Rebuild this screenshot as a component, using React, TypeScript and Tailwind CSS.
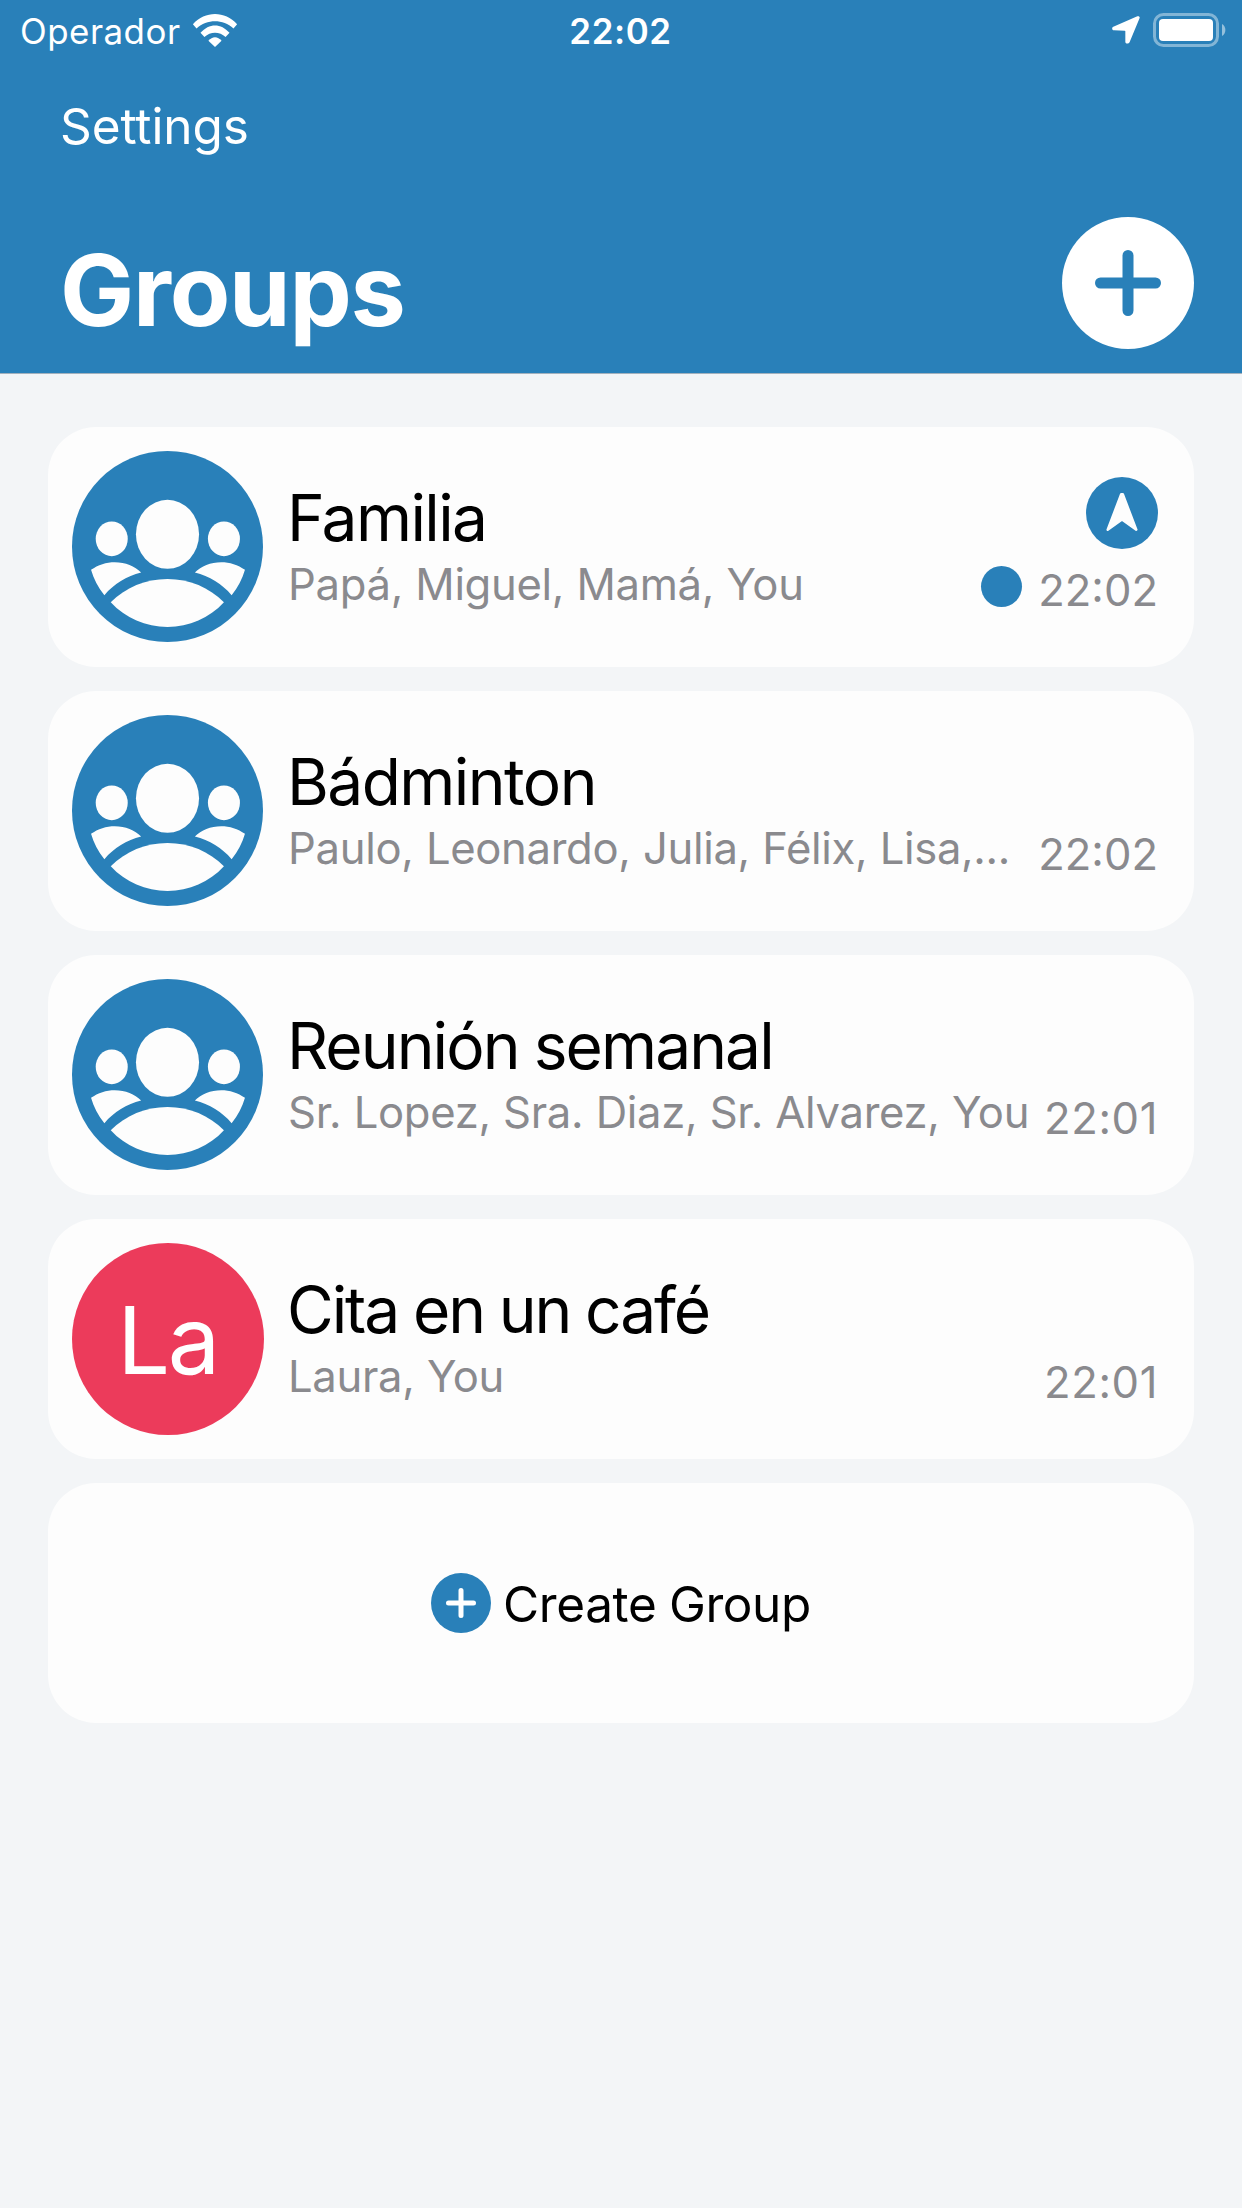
import React from "react";

type Group = {
  name: string;
  nameSpacing: string;
  members: string;
  time: string;
  timeSpacing: string;
  initials?: string;
  unread?: boolean;
  sharingLocation?: boolean;
};

const groups: Group[] = [
  {
    name: "Familia",
    nameSpacing: "tracking-[-1.6px]",
    members: "Papá, Miguel, Mamá, You",
    time: "22:02",
    timeSpacing: "tracking-normal",
    unread: true,
    sharingLocation: true,
  },
  {
    name: "Bádminton",
    nameSpacing: "tracking-[-1.55px]",
    members: "Paulo, Leonardo, Julia, Félix, Lisa,...",
    time: "22:02",
    timeSpacing: "tracking-normal",
  },
  {
    name: "Reunión semanal",
    nameSpacing: "tracking-[-1.9px]",
    members: "Sr. Lopez, Sra. Diaz, Sr. Alvarez, You",
    time: "22:01",
    timeSpacing: "tracking-[0.6px]",
  },
  {
    name: "Cita en un café",
    nameSpacing: "tracking-[-2.1px]",
    members: "Laura, You",
    time: "22:01",
    timeSpacing: "tracking-[0.6px]",
    initials: "La",
  },
];

function WifiIcon() {
  return (
    <svg viewBox="0 0 136 100" className="h-[33px] w-[46px]" fill="currentColor">
      <path d="M1 31C38 -10 98 -10 135 31L124 44C92 15 44 15 12 44Z" />
      <path d="M24 57C50 27 86 27 112 57L100 70C82 52 54 52 36 70Z" />
      <path d="M48 81C60 66.500 76 66.500 88 81L68 100Z" />
    </svg>
  );
}

function LocationIcon() {
  return (
    <svg viewBox="0 0 84 84" className="size-7" fill="currentColor">
      <path d="M76 1C81 -1 85 3 82 8L53 78C50 84 41 84 40 78V46Q40 44 38 44L6 43C-1 42 -1 34 4 32Z" />
    </svg>
  );
}

function BatteryIcon() {
  return (
    <svg viewBox="0 0 73 34" className="h-[34px] w-[73px]">
      <rect x="1.5" y="1.500" width="63" height="31" rx="9" fill="none" stroke="white" strokeOpacity=".42" strokeWidth="3" />
      <rect x="6" y="6" width="54" height="22" rx="4" fill="white" />
      <path d="M69 11A7 7 0 0 1 69 23Z" fill="white" fillOpacity=".5" />
    </svg>
  );
}

function PeopleIcon() {
  return (
    <svg viewBox="0 0 572 572" className="size-[191px]">
      <circle cx="286" cy="286" r="286" fill="#2980b9" />
      <g fill="#fdfdfd">
        <ellipse cx="286" cy="249.500" rx="94.500" ry="103.500" />
        <ellipse cx="119" cy="263" rx="48" ry="52" />
        <ellipse cx="455" cy="263" rx="48" ry="52" />
        <path d="M57 356C78 341 103 333 128 333C160 333 188 344 207 364C164 375 125 398 97 432C78 409 65 383 57 356Z" />
        <path d="M518 356C497 341 472 333 447 333C415 333 387 344 368 364C411 375 450 398 478 432C497 409 510 383 518 356Z" />
        <path d="M116 453C160 408 220 383 286 383S411 408 455 453C411 501 351 527 286 527S160 501 116 453Z" />
      </g>
    </svg>
  );
}

function NavigationBadge() {
  return (
    <svg viewBox="0 0 72 72" className="size-[72px]">
      <circle cx="36" cy="36" r="36" fill="#2980b9" />
      <path
        d="M35.200 17.300H36.800L50.300 52.700L36 42.600L21.700 52.700Z"
        fill="#fdfdfd"
        stroke="#fdfdfd"
        strokeWidth="2.500"
        strokeLinejoin="round"
      />
    </svg>
  );
}

function StatusBar() {
  return (
    <div className="grid h-[60px] grid-cols-3 items-center pl-5 pr-5 text-[34.9px]">
      <div className="flex items-center gap-[11px]">
        <span className="pt-[3px] leading-none tracking-[0.5px]">Operador</span>
        <WifiIcon />
      </div>
      <div className="pr-px pt-[3px] text-center font-semibold leading-none tracking-[0.6px]">22:02</div>
      <div className="-mr-1 flex items-center justify-end gap-[13px]">
        <LocationIcon />
        <BatteryIcon />
      </div>
    </div>
  );
}

function GroupCard({ group }: { group: Group }) {
  return (
    <li className="flex h-[240px] rounded-[48px] bg-[#fdfdfd] pl-6 pr-9">
      <div className="w-48 shrink-0 pt-6">
        {group.initials ? (
          <div className="flex size-48 items-center justify-center rounded-full bg-[#ec3b5b] pr-px pt-[3px] text-[93.5px] leading-none tracking-[-2.5px] text-white">
            {group.initials}
          </div>
        ) : (
          <PeopleIcon />
        )}
      </div>
      <div className="min-w-0 flex-1 whitespace-nowrap pl-6 pt-[53px]">
        <h2 className={`-ml-px text-[64px] leading-[76px] text-black [word-spacing:-1px] ${group.nameSpacing}`}>{group.name}</h2>
        <p className="text-[43.6px] leading-[57px] tracking-[-0.32px] text-[#8a8a8e] [word-spacing:0.5px]">{group.members}</p>
      </div>
      <div className="flex shrink-0 flex-col items-end pt-[50px]">
        <div className="h-[72px]">{group.sharingLocation && <NavigationBadge />}</div>
        <div className="mt-[10px] flex h-[60px] items-center gap-4">
          {group.unread && <span className="mb-[5px] size-[41px] rounded-full bg-[#2980b9]" />}
          <time className={`pt-[3px] text-[43.6px] leading-none text-[#8a8a8e] ${group.timeSpacing}`}>{group.time}</time>
        </div>
      </div>
    </li>
  );
}

export default function App() {
  return (
    <div className="min-h-[2208px] w-[1242px] bg-[#f3f5f7] font-['Inter','Liberation_Sans',sans-serif]">
      <header className="h-[374px] border-b border-[#a3b1bd] bg-[#2980b9] text-white">
        <StatusBar />
        <div className="flex h-[132px] items-center pl-[60px]">
          <button className="pt-[2px] text-[49.5px] leading-none tracking-[-0.1px]">Settings</button>
        </div>
        <div className="flex items-center justify-between pl-[60px] pr-12 pt-[25px]">
          <h1 className="pt-[14px] text-[98.9px] font-bold leading-none tracking-[-1.2px]">Groups</h1>
          <button className="flex size-[132px] items-center justify-center rounded-full bg-white" aria-label="Add group">
            <svg viewBox="0 0 66 66" className="size-[66px]" stroke="#2980b9" strokeWidth="11" strokeLinecap="round">
              <path d="M33 5.500V60.500M5.500 33H60.500" />
            </svg>
          </button>
        </div>
      </header>
      <main className="px-12 pt-[53px]">
        <ul className="flex flex-col gap-6">
          {groups.map((group) => (
            <GroupCard key={group.name} group={group} />
          ))}
          <li className="flex h-[240px] items-center justify-center gap-3 rounded-[48px] bg-[#fdfdfd]">
            <svg viewBox="0 0 60 60" className="size-[60px]">
              <circle cx="30" cy="30" r="30" fill="#2980b9" />
              <path d="M30 17.500V42.500M17.500 30H42.500" stroke="white" strokeWidth="5" strokeLinecap="round" />
            </svg>
            <span className="pt-1 text-[49.5px] leading-none tracking-[-0.4px] text-black [word-spacing:-1px]">Create Group</span>
          </li>
        </ul>
      </main>
    </div>
  );
}
